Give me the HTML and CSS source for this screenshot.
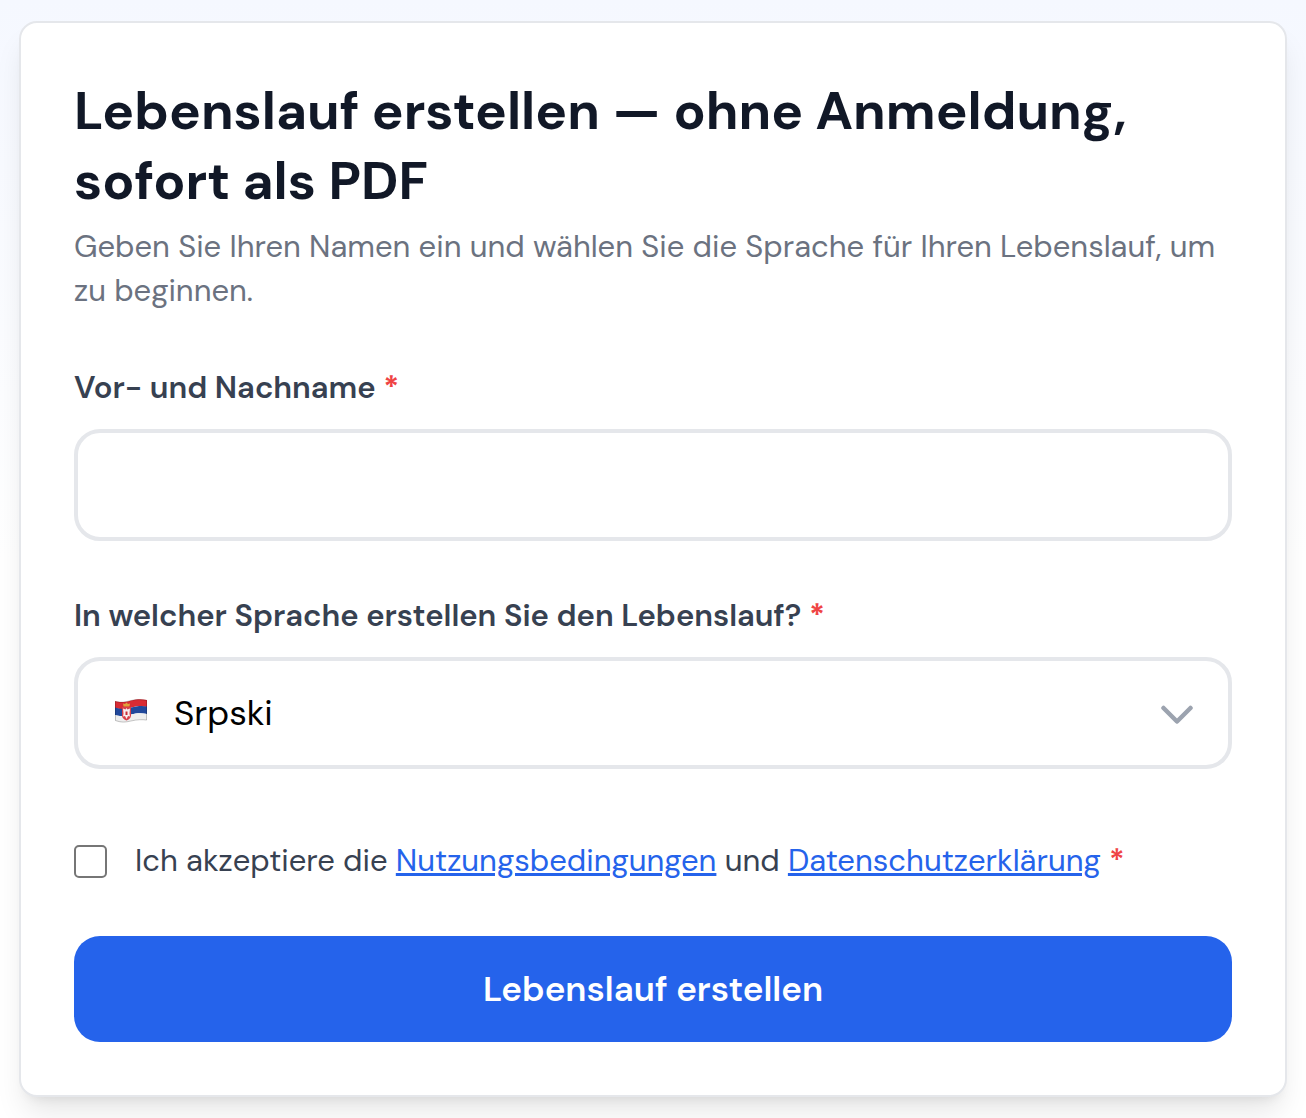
FILE: index.html
```html
<!DOCTYPE html>
<html lang="de">

<head>
    <meta charset="utf-8">
    <meta name="viewport" content="width=device-width, initial-scale=1">
    <title>Lebenslauf erstellen</title>
    <link rel="stylesheet" href="styles.css">
</head>

<body>
    <main class="card">
        <h1>Lebenslauf erstellen — ohne Anmeldung, sofort als PDF</h1>
        <p class="intro">Geben Sie Ihren Namen ein und wählen Sie die Sprache für Ihren Lebenslauf, um zu beginnen.</p>

        <form>
            <div class="field">
                <label for="name">Vor- und Nachname <span class="required">*</span></label>
                <input type="text" id="name" name="name" class="control">
            </div>

            <div class="field">
                <label for="language">In welcher Sprache erstellen Sie den Lebenslauf? <span class="required">*</span></label>
                <div class="select-wrap">
                    <svg class="flag" viewBox="0 0 32 24" aria-hidden="true">
                        <path fill="#d92b34" d="M0 2C6 4 10 3 16 1.500S27 0 32 1V8C27 7 22 7 16 8.500S6 11 0 9Z" />
                        <path fill="#21489b" d="M0 8.500C6 10.500 10 10 16 8.500S27 6.500 32 7.500V15C27 14 22 14 16 15.500S6 18 0 16Z" />
                        <path fill="#eeeeee" d="M0 16C6 18 10 17 16 15.500S27 14 32 15V21.500C27 20.500 22 20.500 16 22S6 24 0 22Z" />
                        <path fill="#d8404a" d="M7 8h9v8.500c0 2.500-2 4-4.500 5C9 20.500 7 19 7 16.500Z" />
                        <path fill="#f8eeee" d="M11.500 9l1 1.500 2.500-1-.5 5 .5 3-2-.5-1.500 3-1.500-3-2 .5.5-3-.5-5 2.500 1Z" />
                        <path fill="#c92d37" d="M10.500 12.500h2v3.500h-2Z" />
                        <path fill="#dfa33b" d="M8.500 7.500l-.5-3 2 .5 1.500-1.500 1.500 1.500 2-.5-.5 3Z" />
                        <path fill="none" stroke="#000" stroke-opacity=".2" d="M.5 2.500C6 4 10 3 16 1.500S27 .5 31.500 1.500V21C27 20.500 22 20.500 16 22S6 23.500.5 21.500Z" />
                    </svg>
                    <select id="language" name="language" class="control">
                        <option>Srpski</option>
                    </select>
                    <svg class="chevron" viewBox="0 0 32 20" aria-hidden="true">
                        <path d="M2.500 3L16 16.500 29.500 3" />
                    </svg>
                </div>
            </div>

            <div class="terms">
                <input type="checkbox" id="terms" name="terms">
                <label for="terms">Ich akzeptiere die <a href="#">Nutzungsbedingungen</a> und <a href="#">Datenschutzerklärung</a> <span class="required">*</span></label>
            </div>

            <button type="submit">Lebenslauf erstellen</button>
        </form>
    </main>
</body>

</html>
```

FILE: styles.css
```css
* {
    box-sizing: border-box;
    margin: 0;
    padding: 0;
}

body {
    min-height: 100vh;
    padding: 21px 19px;
    color: #374151;
    background: linear-gradient(#f5f8ff, #fff 50%);
    font: 31px/44px "DM Sans", Inter, "Liberation Sans", sans-serif;
}

.card {
    padding: 53px;
    background: #fff;
    border: 2px solid #e5e7eb;
    border-radius: 18px;
    box-shadow: 0 20px 30px -6px rgba(0, 0, 0, .1), 0 8px 12px -8px rgba(0, 0, 0, .1);
}

h1 {
    color: #111827;
    font-size: 53px;
    font-weight: 700;
    line-height: 70px;
}

.intro {
    margin-top: 9px;
    color: #6b7280;
}

form {
    margin-top: 53px;
}

.field {
    margin-bottom: 53px;
}

.field label {
    display: block;
    margin-bottom: 19px;
    font-weight: 600;
}

.required {
    color: #ef4444;
    font-weight: 600;
}

.field .required {
    font-weight: 800;
}

.control {
    display: block;
    width: 100%;
    height: 112px;
    padding: 0 36px;
    color: #000;
    background: #fff;
    border: 4px solid #e5e7eb;
    border-radius: 26px;
    font: inherit;
    font-size: 35px;
}

.select-wrap {
    position: relative;
}

select.control {
    padding-left: 96px;
    appearance: none;
}

.flag {
    position: absolute;
    top: 42px;
    left: 41px;
    width: 32px;
    height: 24px;
}

.chevron {
    position: absolute;
    top: 48px;
    right: 39px;
    width: 32px;
    height: 20px;
    fill: none;
    stroke: #9ca3af;
    stroke-width: 4.5;
    stroke-linecap: round;
    stroke-linejoin: round;
    pointer-events: none;
}

.terms {
    display: flex;
    align-items: center;
    gap: 28px;
    margin: 70px 0 53px;
}

.terms input {
    flex: none;
    width: 33px;
    height: 33px;
    background: #fff;
    border: 2px solid #767676;
    border-radius: 5px;
    appearance: none;
}

.terms input:checked {
    background: #2563eb;
}

.terms a {
    color: #2563eb;
    text-decoration: underline;
}

button {
    display: block;
    width: 100%;
    height: 106px;
    color: #fff;
    background: #2563eb;
    border: 0;
    border-radius: 26px;
    font: inherit;
    font-size: 35px;
    font-weight: 600;
    cursor: pointer;
}
```
